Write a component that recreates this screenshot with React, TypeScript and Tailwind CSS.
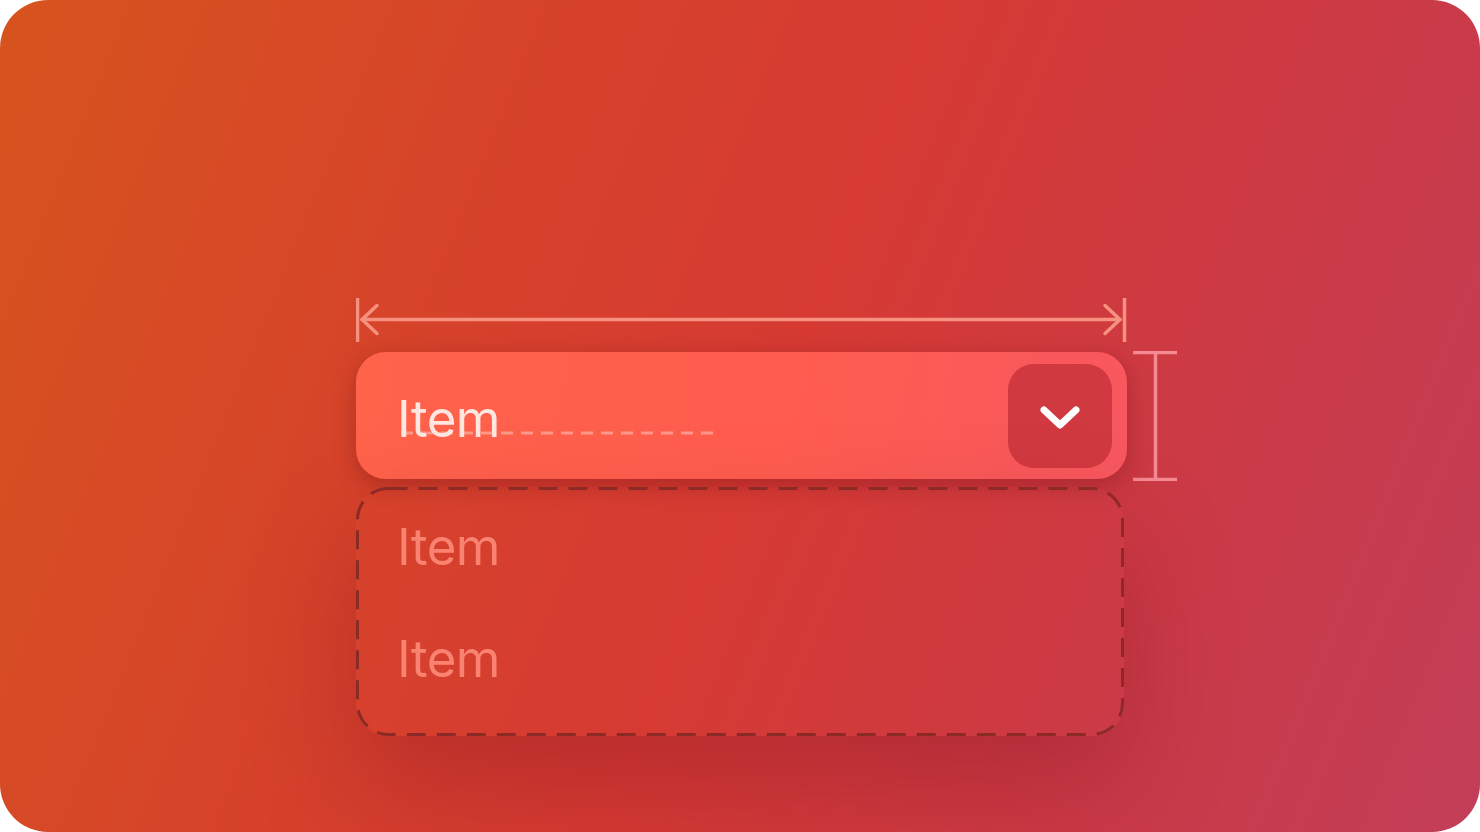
import React from "react";

function WidthArrow() {
  return (
    <svg width="772" height="44" viewBox="0 0 772 44" fill="none">
      <g stroke="#f6917f" strokeWidth="3.5" strokeLinecap="round" strokeLinejoin="round">
        <line x1="1.5" y1="0" x2="1.5" y2="44" strokeLinecap="butt" />
        <line x1="768.5" y1="0" x2="768.5" y2="44" strokeLinecap="butt" />
        <line x1="6" y1="21.5" x2="764" y2="21.5" />
        <polyline points="21,7.5 6,21.5 21,35.5" />
        <polyline points="749,7.5 764,21.5 749,35.5" />
      </g>
    </svg>
  );
}

function HeightBracket() {
  return (
    <svg width="44" height="130" viewBox="0 0 44 130" fill="none">
      <g stroke="#f68a92" strokeWidth="3.5">
        <line x1="0" y1="1.5" x2="44" y2="1.5" />
        <line x1="0" y1="128.5" x2="44" y2="128.5" />
        <line x1="22.5" y1="1.5" x2="22.5" y2="128.5" />
      </g>
    </svg>
  );
}

function Chevron() {
  return (
    <svg width="42" height="28" viewBox="0 0 42 28" fill="none">
      <polyline
        points="5,6 21,21 37,6"
        stroke="#ffffff"
        strokeWidth="7"
        strokeLinecap="round"
        strokeLinejoin="round"
      />
    </svg>
  );
}

export default function App() {
  return (
    <div className="w-[1480px] h-[832px] bg-white font-['Inter',sans-serif]">
      <div className="w-full h-full rounded-[48px] overflow-hidden bg-[linear-gradient(112deg,#d6541e_0%,#d6422b_32%,#d63a33_52%,#cc3a45_75%,#c23e58_100%)] pl-[356px] pt-[298px]">
        <div className="flex flex-col">
          <WidthArrow />

          <div className="mt-[10px] h-[127px] flex items-start gap-[6px]">
            <div className="relative flex items-start w-[771px] h-[127px] rounded-[30px] bg-[linear-gradient(100deg,#ff634a_0%,#ff5d4f_55%,#f7575f_100%)] shadow-[0_6px_22px_rgba(110,15,20,0.35)]">
              <svg
                className="absolute left-[44px] top-[79px]"
                width="314"
                height="4"
                viewBox="0 0 314 4"
                fill="none"
              >
                <line
                  x1="1"
                  y1="2"
                  x2="314"
                  y2="2"
                  stroke="rgba(255,200,190,0.55)"
                  strokeWidth="3"
                  strokeDasharray="12 8"
                />
              </svg>
              <div className="relative pl-[41px] pt-[41px] text-[51px] leading-none tracking-[-0.5px] text-[#ffe6e1]">
                Item
              </div>
              <div className="ml-auto mr-[15px] mt-[12px] flex items-center justify-center size-[104px] rounded-[26px] bg-[#d0393f] pt-[3px]">
                <Chevron />
              </div>
            </div>
            <div className="-mt-[1px]">
              <HeightBracket />
            </div>
          </div>

          <div className="relative mt-[8px] w-[768px] h-[249px] rounded-[32px] shadow-[0_50px_110px_rgba(120,15,35,0.32)]">
            <svg
              className="absolute inset-0"
              width="768"
              height="249"
              viewBox="0 0 768 249"
              fill="none"
            >
              <rect
                x="1.5"
                y="1.5"
                width="765"
                height="246"
                rx="31"
                stroke="#8d2a26"
                strokeWidth="3"
                strokeDasharray="19 11"
              />
            </svg>
            <div className="relative flex flex-col pl-[41px] pt-[34px] gap-[61px] text-[51px] leading-none tracking-[-0.5px] text-[#f98271]">
              <div>Item</div>
              <div>Item</div>
            </div>
          </div>
        </div>
      </div>
    </div>
  );
}
